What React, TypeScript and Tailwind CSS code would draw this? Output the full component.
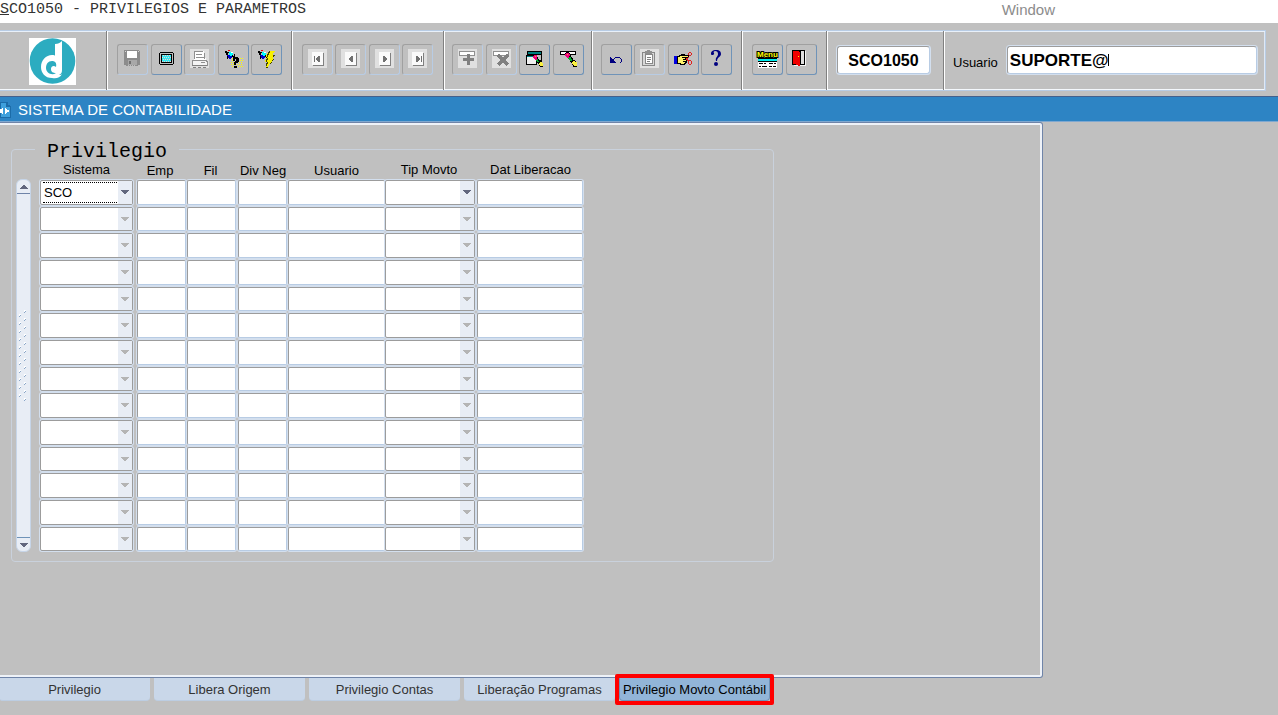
import React from 'react';
import clsx from 'clsx';

function Icon({ children }: { children: React.ReactNode }) {
  return (
    <svg width="19" height="19" viewBox="0 0 19 19" shapeRendering="crispEdges" aria-hidden="true">
      {children}
    </svg>
  );
}

function Torch() {
  return (
    <>
      <path d="M1 2h2v1h2v1h-1v2h1v1h-2v-1h-1v-2h-1zM3 7h1v3h-1zM8 6h1v1h1v-2h1v4h-2v-1h-1z" fill="#000" />
      <path d="M5 3h2v1h2v2h-1v1h-2v-1h-1z" fill="#00ffff" />
      <path d="M3 6h3v1h2v2h-1v1h-2v-1h-1v-2h-1z" fill="#0000c8" />
      <path d="M4 1h2v1h-2z" fill="#f00000" />
      <path d="M7 3h2v1h-2z" fill="#fff" />
    </>
  );
}

function SaveIcon() {
  return (
    <Icon>
      <path d="M1 1h15v1h1v14h-2v1h-12v-1h-2z" fill="#8c8c8c" />
      <path d="M4 2h10v7h-10z" fill="#fff" />
      <path d="M5 11h9v5h-9z" fill="#a8a8a8" />
      <path d="M6 12h2v3h-2z" fill="#707070" />
      <path d="M2 2h1v1h-1zM15 2h1v1h-1z" fill="#d8d8d8" />
      <path d="M5 16h1v1h-1zM7 16h1v1h-1zM9 16h1v1h-1zM11 16h1v1h-1z" fill="#c0c0c0" />
    </Icon>
  );
}

function ScreenIcon() {
  return (
    <Icon>
      <path d="M3 3h13v1h1v11h-1v1h-13v-1h-1v-11h1z" fill="#000" />
      <path d="M3 4h13v11h-13z" fill="#c0c0c0" />
      <path d="M4 5h11v9h-11z" fill="#000" />
      <path d="M5 6h9v7h-9z" fill="#30e8f0" />
      <path
        d="M6 6h1v1h-1zM8 6h1v1h-1zM10 6h1v1h-1zM12 6h1v1h-1zM5 8h1v1h-1zM7 8h1v1h-1zM9 8h1v1h-1zM11 8h1v1h-1zM13 8h1v1h-1zM6 10h1v1h-1zM8 10h1v1h-1zM10 10h1v1h-1zM12 10h1v1h-1zM5 12h1v1h-1zM7 12h1v1h-1zM9 12h1v1h-1zM11 12h1v1h-1zM13 12h1v1h-1z"
        fill="#f0d0d0"
      />
    </Icon>
  );
}

function PrintIcon() {
  return (
    <Icon>
      <path d="M0 0h19v19h-19z" fill="#e0e0e0" />
      <path d="M4 2h10l2 9h-12z" fill="#fff" />
      <path d="M4 2h9v1h-9zM6 5h6v1h-6zM6 8h8v1h-8zM4 3h1v7h-1zM14 4h1v6h-1z" fill="#909090" />
      <path d="M2 11h14v1h1v4h-15z" fill="#f4f4f4" stroke="#909090" strokeWidth="1" />
      <path d="M11 13h4v1h-4z" fill="#909090" />
      <path d="M2 16h15v1h-15zM3 18h3v1h-3zM8 18h3v1h-3zM13 18h3v1h-3z" fill="#808080" />
    </Icon>
  );
}

function QueryIcon() {
  return (
    <Icon>
      <path
        d="M8 9.5h11M8 11.5h11M7 13.5h12M7 15.5h12M8 17.5h11"
        stroke="#ffff00"
        strokeDasharray="1 1"
      />
      <Torch />
      <path d="M10 8h4v1h1v4h-1v1h-2v2h-2v-3h1v-1h1v-2h-1v2h-2v-3h1zM10 17h3v2h-3z" fill="#000" />
    </Icon>
  );
}

function ExecuteIcon() {
  return (
    <Icon>
      <Torch />
      <path d="M12 2h6v1h-1v1h-1v2h2v1h-1v1h-1v2h1v1h-1v1h-1v1h-1v1h-1v1h-1v2h-1v1h-2v-3h1v-2h-2v-2h1v-2h1v-1h-1v-2h1v-2h2z" fill="#f8f000" />
      <path d="M12 2h1v2h-1v2h-1v2h-1v-3h1v-2h1zM10 9h1v2h-1v2h-1v-3h1zM10 13h1v2h-1v2h-1v-3h1zM16 6h2v1h-1v1h-1zM16 10h1v1h-1v1h-1v-1h1zM14 13h1v1h-1v1h-1v-1h1zM9 18h2v1h-2z" fill="#404000" />
    </Icon>
  );
}

function MoveIcon({ left, bar }: { left?: boolean; bar?: boolean }) {
  return (
    <Icon>
      <path d="M0 0h19v19h-19z" fill="#e0e0e0" />
      <path d="M5 4h11v13h-11z" fill="#808080" />
      <path d="M4 3h11v13h-11z" fill="#fafafa" />
      {left ? (
        <path d="M12 7v6h-2v-1h-1v-1h-1v-2h1v-1h1v-1z" fill="#707070" />
      ) : (
        <path d="M8 7v6h2v-1h1v-1h1v-2h-1v-1h-1v-1z" fill="#707070" />
      )}
      {bar && left && <path d="M6 7h1v6h-1z" fill="#707070" />}
      {bar && !left && <path d="M13 7h1v6h-1z" fill="#707070" />}
    </Icon>
  );
}

function RecordIcon({ remove }: { remove?: boolean }) {
  return (
    <Icon>
      <path d="M0 0h19v19h-19z" fill="#e0e0e0" />
      <path d="M1.5 2.5h15v4h-15z" fill="#fff" stroke="#909090" />
      {remove ? (
        <path d="M6 6l10 10M16 6l-10 10" stroke="#808080" strokeWidth="3" />
      ) : (
        <path d="M9 5h3v4h4v3h-4v4h-3v-4h-4v-3h4z" fill="#808080" />
      )}
    </Icon>
  );
}

function Eraser() {
  return (
    <>
      <path d="M5 5h1v-1h1v-1h3v1h1v2h1v2h1v1h1v2h2v1h1v1h1v5h-4v-2h-1v-2h-1v-1h-1v-2h-1v-1h-1v-2h-2v-2h-1z" fill="#000" />
      <path d="M6 5h1v-1h3v1h1v2h-1v2h-2v-1h-1v-1h-1z" fill="#f00080" />
      <path d="M9 9h1v-1h2v2h1v2h-2v-1h-1v-1h-1z" fill="#00b030" />
      <path d="M13 13h1v-1h2v1h2v4h-3v-1h-1v-1h-1z" fill="#f8f040" />
      <path d="M8 5h1v1h-1z" fill="#ffc000" />
    </>
  );
}

function ClearFormIcon() {
  return (
    <Icon>
      <path d="M2 2h15v10h-15z" fill="#000" />
      <path d="M3 3h13v2h-13z" fill="#008080" />
      <path d="M3 6h13v5h-13z" fill="#c0c0c0" />
      <path d="M1 6h11v10h-11z" fill="#000" />
      <path d="M2 8h9v7h-9z" fill="#f0f0f0" />
      <path d="M2 7h9v1h-9z" fill="#008080" />
      <g transform="translate(3 3) scale(0.85)">
        <Eraser />
      </g>
    </Icon>
  );
}

function ClearRecordIcon() {
  return (
    <Icon>
      <path d="M1.5 2.5h15v3h-15z" fill="#fff" stroke="#000" />
      <Eraser />
    </Icon>
  );
}

function UndoIcon() {
  return (
    <Icon>
      <path d="M3 8h1v1h1v1h1v1h1v1h1v1h1v1h-6z" fill="#000080" />
      <path d="M6 10h1v-1h1v-1h5v1h1v1h1v3h-1v1h-1v-1h1v-3h-1v-1h-5v1h-1v1h-1z" fill="#000080" />
    </Icon>
  );
}

function ClipboardIcon() {
  return (
    <Icon>
      <path d="M0 0h19v19h-19z" fill="#e0e0e0" />
      <path d="M2.5 3.5h12v13h-12z" fill="#d8d8d8" stroke="#888" />
      <path d="M5.5 5.5h7v9h-7z" fill="#fff" stroke="#888" />
      <path d="M5 2h2v-1h3v1h2v3h-7z" fill="#909090" />
      <path d="M7 8h4v1h-4zM7 10h4v1h-4zM7 12h3v1h-3z" fill="#808080" />
    </Icon>
  );
}

function CutIcon() {
  return (
    <Icon>
      <path d="M0 7h3v8h-3z" fill="#0000e0" />
      <path d="M3 7h2v-1h2v-1h4v1h4v3h-2v5h-1v1h-1v1h-5v-1h-3z" fill="#000" />
      <path d="M4 8h2v-1h4v1h-2v1h3v1h-2v1h3v1h-3v1h2v1h-1v1h-3v-1h-3z" fill="#fff36b" />
      <path d="M10 7h4v1h-4z" fill="#ffe860" />
      <path d="M12 11l3-3M12 9l3 4" stroke="#e02020" fill="none" />
      <path d="M14 4h1v-1h2v1h1v2h-1v1h-2v-1h-1zM15 4v2h2v-2zM14 12h1v-1h2v1h1v3h-1v1h-2v-1h-1zM15 12v3h2v-3z" fill="#e02020" fillRule="evenodd" />
    </Icon>
  );
}

function HelpIcon() {
  return (
    <svg width="19" height="19" viewBox="0 0 19 19" aria-hidden="true">
      <path d="M4 5C4 2 6 1 9 1C13 1 14 3 14 5C14 8 10 8 10 12H9C8 8 11 8 11 5C11 3 10 2 8 2C7 2 6 3 7 4C8 6 4 7 4 5Z" fill="#000080" />
      <circle cx="9" cy="15" r="2" fill="#000080" />
    </svg>
  );
}

function MenuIcon() {
  return (
    <svg width="19" height="19" viewBox="0 0 19 19" shapeRendering="crispEdges" className="overflow-visible" aria-hidden="true">
      <text
        x="-1"
        y="8"
        className="font-['Liberation_Sans',Arial,sans-serif] text-[8px] font-bold"
        fill="#ffff00"
        stroke="#000"
        strokeWidth="2"
        paintOrder="stroke"
      >
        Menu
      </text>
      <path d="M0 9h19v4h-19z" fill="#000" />
      <path d="M0 10h19v2h-19z" fill="#00f0f0" />
      <path d="M0 13h19v6h-19z" fill="#fff" />
      <path d="M1 14h4v1h-4zM6 14h2v1h-2zM11 14h4v1h-4zM16 14h2v1h-2zM1 17h2v1h-2zM4 17h5v1h-5zM11 17h3v1h-3zM15 17h3v1h-3z" fill="#000" />
    </svg>
  );
}

function ExitIcon() {
  return (
    <Icon>
      <path d="M2 2h12v15h-12z" fill="#f4f4f4" />
      <path d="M0 1h13v15h-13z" fill="#000" />
      <path d="M9 2h3v13h-3z" fill="#e0e0e0" />
      <path d="M1 2h6v1h1v14h-2v-1h-2v-1h-3z" fill="#f00000" />
      <path d="M6 7h1v1h-1z" fill="#ffff00" />
    </Icon>
  );
}

interface Tool {
  label: string;
  icon: React.ReactNode;
  disabled?: boolean;
}

const fileTools: Tool[] = [
  { label: 'Salvar', icon: <SaveIcon />, disabled: true },
  { label: 'Tela', icon: <ScreenIcon /> },
  { label: 'Imprimir', icon: <PrintIcon />, disabled: true },
  { label: 'Entrar consulta', icon: <QueryIcon /> },
  { label: 'Executar consulta', icon: <ExecuteIcon /> },
];

const moveTools: Tool[] = [
  { label: 'Primeiro', icon: <MoveIcon left bar />, disabled: true },
  { label: 'Anterior', icon: <MoveIcon left />, disabled: true },
  { label: 'Proximo', icon: <MoveIcon />, disabled: true },
  { label: 'Ultimo', icon: <MoveIcon bar />, disabled: true },
];

const recordTools: Tool[] = [
  { label: 'Inserir', icon: <RecordIcon />, disabled: true },
  { label: 'Remover', icon: <RecordIcon remove />, disabled: true },
  { label: 'Limpar tela', icon: <ClearFormIcon /> },
  { label: 'Limpar registro', icon: <ClearRecordIcon /> },
];

const editTools: Tool[] = [
  { label: 'Desfazer', icon: <UndoIcon /> },
  { label: 'Colar', icon: <ClipboardIcon />, disabled: true },
  { label: 'Recortar', icon: <CutIcon /> },
  { label: 'Ajuda', icon: <HelpIcon /> },
];

const exitTools: Tool[] = [
  { label: 'Menu', icon: <MenuIcon /> },
  { label: 'Sair', icon: <ExitIcon /> },
];

function ToolGroup({ tools, className, row }: { tools: Tool[]; className: string; row: string }) {
  return (
    <div className={clsx('shrink-0 border-r border-r-[#808080] pt-[13px] shadow-[1px_0_0_#fff]', className)}>
      <div className={clsx('flex justify-between', row)}>
        {tools.map(tool => (
          <button
            key={tool.label}
            type="button"
            aria-label={tool.label}
            disabled={tool.disabled}
            className={clsx(
              'flex h-[31px] w-[31px] items-start justify-center rounded-[3px] border border-t-[#a0a0a0] border-l-[#a0a0a0] pt-1',
              tool.disabled ? 'border-r-[#b8cce4] border-b-[#b8cce4]' : 'border-r-[#6f93b8] border-b-[#6f93b8]'
            )}
          >
            {tool.icon}
          </button>
        ))}
      </div>
    </div>
  );
}

function Logo() {
  return (
    <svg width="47" height="47" viewBox="0 0 47 47" className="bg-white" role="img" aria-label="Logo">
      <circle cx="23.5" cy="23" r="22.8" fill="#2cacc0" />
      <path
        d="M26 6c3 0 5-1 7-3v29c0 3-1 4-3 5 1 0 2 0 3-1-2 4-6 5-10 4-7 0-11-5-11-11 0-7 5-12 11-12 2 0 3 0 3 1zM23 23c-4 0-6 3-6 7 0 5 6 8 10 5-3 0-5-1-5-4s3-4 5-2c1-4-1-6-4-6z"
        fill="#fff"
        fillRule="evenodd"
      />
    </svg>
  );
}

const columns = [
  { name: 'Sistema', width: 'w-[97px]', head: 'pr-1 pb-px', field: 'w-[93px]', list: true },
  { name: 'Emp', width: 'w-[50px]', head: 'pr-1 pb-0', field: 'w-[49px]' },
  { name: 'Fil', width: 'w-[51px]', head: 'pr-1 pb-0', field: 'w-[49px]' },
  { name: 'Div Neg', width: 'w-[50px]', head: 'pb-0', field: 'w-[49px]' },
  { name: 'Usuario', width: 'w-[97px]', head: 'pb-0', field: 'w-[97px]' },
  { name: 'Tip Movto', width: 'w-[92px]', head: 'pr-1 pb-px', field: 'w-[90px]', list: true },
  { name: 'Dat Liberacao', width: 'w-[107px]', head: 'pb-px', field: 'w-[106px]' },
];

const rows = Array.from({ length: 14 }, (_, i) => i);

function ListField({ label, value, active, focused }: { label: string; value: string; active: boolean; focused: boolean }) {
  return (
    <div className="grid h-full rounded-[2px] border border-[#9c9c9c] bg-white shadow-[0_0_0_1px_#d3dfee]">
      <select
        aria-label={label}
        defaultValue={value}
        disabled={!active}
        className="col-start-1 row-start-1 h-full w-full appearance-none bg-transparent pl-[3px] text-[13px] leading-4 text-black outline-none"
      >
        <option value={value}>{value}</option>
      </select>
      {focused && (
        <span className="pointer-events-none col-start-1 row-start-1 mt-px mr-[15px] mb-px ml-[2px] border-y border-dotted border-black" />
      )}
      <span className="pointer-events-none col-start-1 row-start-1 flex w-[14px] items-center justify-center justify-self-end bg-[#e8edf5] pb-px">
        <svg width="8" height="4" viewBox="0 0 8 4" shapeRendering="crispEdges">
          <path d="M0 0h8v1h-1v1h-1v1h-1v1h-2v-1h-1v-1h-1v-1h-1z" fill={active ? '#62677e' : '#b4b4b4'} />
        </svg>
      </span>
    </div>
  );
}

function PrivilegeTable() {
  return (
    <table className="w-[544px] table-fixed border-separate border-spacing-0">
      <thead>
        <tr className="h-[22px]">
          {columns.map(col => (
            <th key={col.name} className={clsx('p-0 align-bottom text-[13px] leading-4 font-normal whitespace-nowrap', col.width, col.head)}>
              {col.name}
            </th>
          ))}
        </tr>
      </thead>
      <tbody>
        {rows.map(i => (
          <tr key={i} className={i % 3 === 1 ? 'h-[26px]' : 'h-[27px]'}>
            {columns.map(col => (
              <td key={col.name} className="p-0 align-top">
                <div className={clsx('pt-px', i % 3 === 1 ? 'h-[25px]' : 'h-[26px]', col.field)}>
                  {col.list ? (
                    <ListField
                      label={`${col.name} ${i + 1}`}
                      value={i === 0 && col.name === 'Sistema' ? 'SCO' : ''}
                      active={i === 0}
                      focused={i === 0 && col.name === 'Sistema'}
                    />
                  ) : (
                    <input
                      type="text"
                      aria-label={`${col.name} ${i + 1}`}
                      className="block h-full w-full rounded-[2px] border border-t-[#9c9c9c] border-r-[#b8cce4] border-b-[#b8cce4] border-l-[#9c9c9c] bg-white px-1 text-[13px] shadow-[0_0_0_1px_#d3dfee] outline-none"
                    />
                  )}
                </div>
              </td>
            ))}
          </tr>
        ))}
      </tbody>
    </table>
  );
}

function ScrollBar() {
  return (
    <div className="flex w-[15px] flex-col items-center justify-between rounded-[6px] border border-[#c6d5e8] bg-[#e8edf5]">
      <button type="button" aria-label="Subir" className="flex h-[14px] w-full items-center justify-center border-b border-[#6f84a8]">
        <svg width="8" height="4" viewBox="0 0 8 4" shapeRendering="crispEdges">
          <path d="M0 4h8v-1h-1v-1h-1v-1h-1v-1h-2v1h-1v1h-1v1h-1z" fill="#62677e" />
        </svg>
      </button>
      <svg width="9" height="92" viewBox="0 0 9 92" shapeRendering="crispEdges" className="mb-5" aria-hidden="true">
        {Array.from({ length: 23 }, (_, i) => (
          <g key={i}>
            <path d={`M${i % 2 ? 0 : 5} ${i * 4}h2v1h-1v1h-1z`} fill="#fff" />
            <path d={`M${i % 2 ? 2 : 7} ${i * 4 + 1}v1h-1v1h-1v-1h1v-1z`} fill="#8ba7c8" />
          </g>
        ))}
      </svg>
      <button type="button" aria-label="Descer" className="flex h-[14px] w-full items-center justify-center border-t border-[#6f93b8]">
        <svg width="8" height="4" viewBox="0 0 8 4" shapeRendering="crispEdges">
          <path d="M0 0h8v1h-1v1h-1v1h-1v1h-2v-1h-1v-1h-1v-1h-1z" fill="#62677e" />
        </svg>
      </button>
    </div>
  );
}

const tabs = ['Privilegio', 'Libera Origem', 'Privilegio Contas', 'Liberação Programas', 'Privilegio Movto Contábil'];

function Tabs() {
  return (
    <nav className="-ml-px flex gap-1 pb-[14px]">
      {tabs.map((tab, i) => {
        const active = i === tabs.length - 1;
        return (
          <div key={tab} className="relative">
            <button
              type="button"
              className={clsx(
                'block h-[23px] w-[151px] rounded-b-[4px] pt-px text-[13px] leading-4 whitespace-nowrap',
                active ? 'border border-t-0 border-[#6f93b8] bg-[#92b5d8] text-black' : 'border-b border-[#bccde2] bg-[#c9d7e9] text-[#333]'
              )}
            >
              {tab}
            </button>
            {active && <span className="pointer-events-none absolute -inset-1 rounded-[2px] border-4 border-[#ff0000]" />}
          </div>
        );
      })}
    </nav>
  );
}

export default function App() {
  return (
    <div className="flex min-h-screen flex-col overflow-x-hidden bg-[#c0c0c0] font-['Liberation_Sans',Arial,sans-serif] text-black">
      <header className="flex h-[23px] items-start bg-white">
        <h1 className="flex-1 pt-0.5 font-['Liberation_Mono','Courier_New',monospace] text-[15px] leading-4 whitespace-pre text-[#333]">
          <span className="underline">S</span>CO1050 - PRIVILEGIOS E PARAMETROS
        </h1>
        <button type="button" className="mr-[223px] pt-0.5 text-[15px] leading-4 text-[#8c8c8c]">
          Window
        </button>
      </header>

      <div className="mt-[7px] mr-3 flex h-[61px] border-y border-r border-[#b8cce4] shadow-[inset_0_1px_0_#e8f0fa,inset_-1px_0_0_#dfe8f4,inset_0_-1px_0_#f4f8fc]">
        <div className="w-[107px] shrink-0 border-r border-[#808080] pt-[7px] pl-[29px] shadow-[1px_0_0_#fff]">
          <Logo />
        </div>
        <ToolGroup tools={fileTools} className="w-[185px] pl-[10px]" row="w-[165px]" />
        <ToolGroup tools={moveTools} className="w-[152px] pl-[10px]" row="w-[131px]" />
        <ToolGroup tools={recordTools} className="w-[148px] pl-[8px]" row="w-[132px]" />
        <ToolGroup tools={editTools} className="w-[150px] pl-[9px]" row="w-[131px]" />
        <ToolGroup tools={exitTools} className="w-[85px] pl-[10px]" row="w-[65px]" />
        <div className="w-[117px] shrink-0 border-r border-[#808080] pt-[15px] pl-[10px] shadow-[1px_0_0_#fff]">
          <input
            type="text"
            aria-label="Programa"
            defaultValue="SCO1050"
            className="block h-[28px] w-[93px] rounded-[3px] border border-t-[#9c9c9c] border-r-[#b8cce4] border-b-[#b8cce4] border-l-[#9c9c9c] bg-white pt-0.5 text-center text-[16px] font-bold shadow-[0_0_0_1px_#d3dfee] outline-none"
          />
        </div>
        <div className="flex min-w-0 flex-1 items-start gap-[9px] pt-[15px] pr-2 pl-[9px]">
          <label htmlFor="usuario" className="pt-[9px] text-[13px] leading-4">
            Usuario
          </label>
          <div className="relative min-w-0 flex-1">
            <input
              id="usuario"
              type="text"
              defaultValue="SUPORTE@"
              className="block h-[28px] w-full rounded-[3px] border border-t-[#9c9c9c] border-r-[#b8cce4] border-b-[#b8cce4] border-l-[#9c9c9c] bg-white pt-0.5 pl-[2px] text-[17px] font-bold shadow-[0_0_0_1px_#d3dfee] outline-none"
            />
            <span className="pointer-events-none absolute top-2 left-[101px] h-3 w-px bg-black" />
          </div>
        </div>
      </div>

      <div className="mt-[5px] flex h-[26px] items-center border-t border-b border-t-[#44608c] border-b-[#7fa8d0] bg-[#2d84c4] text-white">
        <svg width="11" height="17" viewBox="0 0 11 17" shapeRendering="crispEdges" aria-hidden="true">
          <path d="M0 1h6v4h4v11h-10z" fill="#3fa0dc" stroke="#1c6ca8" />
          <path d="M7 1v3h3" fill="none" stroke="#1c6ca8" />
          <path d="M0 8h2v-1h1v6h-1v-1h-2zM5 7h1v1h1v1h2v2h-2v1h-1v1h-1z" fill="#fff" />
        </svg>
        <h2 className="pt-px pl-[7px] text-[15px] leading-5">SISTEMA DE CONTABILIDADE</h2>
      </div>

      <main className="mr-[235px] flex-1 rounded-r-[3px] border-t border-r border-b border-[#6f84a8] pt-[14px] pl-[11px] shadow-[inset_0_2px_0_#eef2f8,inset_-2px_0_0_#eef2f8,inset_0_-2px_0_#eef2f8]">
        <fieldset className="mr-[268px] rounded-[4px] border border-[#c9d1dc] pb-[9px] pl-1">
          <legend className="ml-[19px] px-3 pt-1.5 font-['Liberation_Mono','Courier_New',monospace] text-[20px] leading-[18px]">
            Privilegio
          </legend>
          <div className="-mt-1 flex">
            <div className="flex pt-[22px] pr-[9px]">
              <ScrollBar />
            </div>
            <PrivilegeTable />
          </div>
        </fieldset>
      </main>

      <Tabs />
    </div>
  );
}
